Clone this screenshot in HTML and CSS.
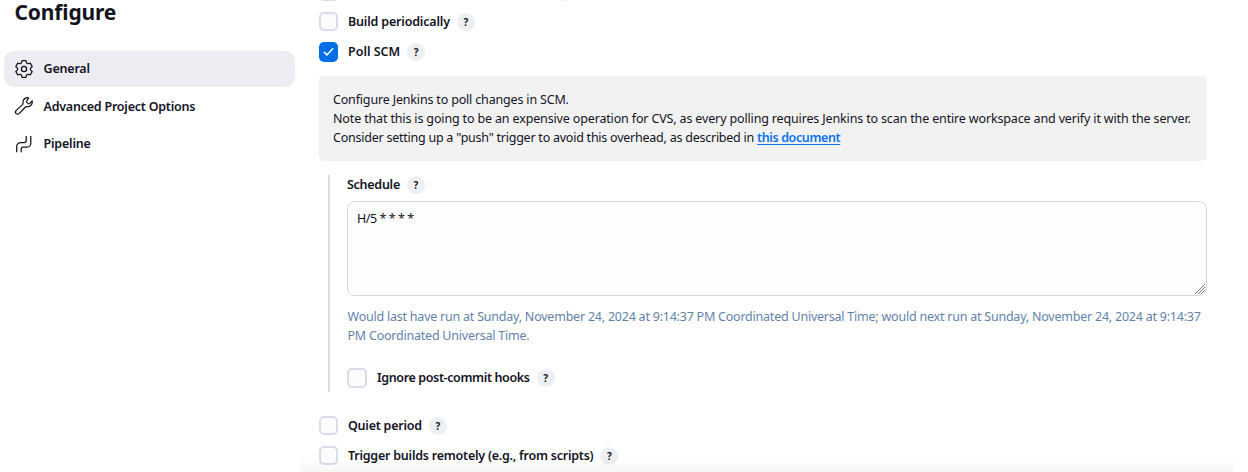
FILE: index.html
```html
<!DOCTYPE html>
<html lang="en">
<head>
<meta charset="utf-8">
<title>Configure</title>
<link rel="stylesheet" href="styles.css">
</head>
<body>
<div class="page">
  <aside class="sidebar">
    <h1 class="title"><span>Configure</span></h1>
    <nav class="tasks">
      <a class="task task--active">
        <svg class="icon" viewBox="0 0 18 18"><circle cx="9" cy="9" r="2.600"/><path d="M7 .7h4l.6 2.300 1.300.75 2.300-.65 2 3.400-1.700 1.600v1.800l1.700 1.600-2 3.400-2.300-.65-1.300.75-.6 2.300H7l-.6-2.300-1.300-.75-2.300.65-2-3.400 1.700-1.600V8.100L.8 6.500l2-3.400 2.300.65L6.400 3z"/></svg>
        <span class="general">General</span>
      </a>
      <a class="task">
        <svg class="icon" viewBox="0 0 18 18"><path d="M13.700.9C11.400.2 8.300 1.700 8 4.500c-.15 1.400.5 2.100-.5 3.100L1.300 13.400c-1.100 1.100-.9 2.500-.2 3.200.8.800 2.200.9 3.200-.2l5.900-6.200c1-1 1.700-.4 3.100-.5 2.900-.3 4.400-3.200 3.900-5.800l-2.500 2.500c-.6.600-1.300.5-1.800 0l-1-1c-.5-.5-.6-1.200 0-1.800z"/></svg>
        <span class="advanced">Advanced Project Options</span>
      </a>
      <a class="task">
        <svg class="icon" viewBox="0 0 18 18"><path d="M1.700 17.200v-5.700a4 4 0 0 1 4-4h3.500a2 2 0 0 0 2-2V1M6.200 17.200v-3a2 2 0 0 1 2-2h3.600a4 4 0 0 0 4-4V1"/></svg>
        <span class="general">Pipeline</span>
      </a>
    </nav>
  </aside>
  <main class="main">
    <div class="row row--clipped"><i class="box"></i><span class="help"></span></div>
    <div class="row"><i class="box"></i><label class="build">Build periodically</label><span class="help">?</span></div>
    <div class="row"><i class="box box--on"><svg viewBox="0 0 19 20"><path d="M5.300 10.300l2.700 2.600 5.700-6.200"/></svg></i><label class="poll">Poll SCM</label><span class="help">?</span></div>
    <section class="info">
      <p class="info-a">Configure Jenkins to poll changes in SCM.</p>
      <p class="info-b">Note that this is going to be an expensive operation for CVS, as every polling requires Jenkins to scan the entire workspace and verify it with the server.</p>
      <p class="info-c">Consider setting up a "push" trigger to avoid this overhead, as described in <a class="link">this document</a></p>
    </section>
    <section class="nested">
      <div class="row row--schedule"><label class="schedule">Schedule</label><span class="help">?</span></div>
      <div class="textarea"><span>H/5 * * * *</span>
        <svg class="grip" viewBox="0 0 10 10"><path d="M0 10L10 0M3 10l7-7M6 10l4-4"/></svg>
      </div>
      <div class="desc"><p>Would last have run at Sunday, November 24, 2024 at 9:14:37 PM Coordinated Universal Time; would next run at Sunday, November 24, 2024 at 9:14:37</p><p>PM Coordinated Universal Time.</p></div>
      <div class="row row--ignore"><i class="box"></i><label class="ignore">Ignore post-commit hooks</label><span class="help">?</span></div>
    </section>
    <div class="row"><i class="box"></i><label class="quiet">Quiet period</label><span class="help">?</span></div>
    <div class="row"><i class="box"></i><label class="trigger">Trigger builds remotely (e.g., from scripts)</label><span class="help">?</span></div>
  </main>
  <div class="shade"></div>
</div>
</body>
</html>
```
FILE: styles.css
```css
* { box-sizing: border-box; }
body { margin: 0; background: #fff; color: #14141f; font: 12.5px/19px "Noto Sans", sans-serif; }
p { margin: 0; white-space: nowrap; }
.page { position: relative; display: flex; width: 1248px; height: 472px; overflow: hidden; }
.sidebar { width: 319px; padding-left: 4px; }
.title { margin: 0 0 26px 10.5px; font-size: 21px; line-height: 25px; font-weight: 700; letter-spacing: -0.15px; }
.tasks { display: flex; flex-direction: column; gap: 2px; width: 291px; }
.task { display: flex; align-items: center; gap: 10.5px; height: 35.5px; padding-left: 11px; border-radius: 10px; font-weight: 600; white-space: nowrap; }
.task--active { background: #ececf2; }
.icon { width: 18px; height: 18px; fill: none; stroke: #14141f; stroke-width: 1.25; stroke-linecap: round; stroke-linejoin: round; overflow: visible; }
.task:last-child .icon { stroke-linecap: butt; }
.general { letter-spacing: -0.2px; }
.advanced { letter-spacing: -0.23px; }
.main { display: flex; flex-direction: column; width: 888px; margin-top: -18px; }
.row { display: flex; align-items: flex-start; height: 20px; margin-bottom: 10px; flex: none; }
.row label { margin-right: 7px; font-weight: 600; white-space: nowrap; }
.row--clipped .help { margin-left: 207px; }
.box { width: 19px; height: 19px; margin-right: 10px; flex: none; border: 2px solid #d8dde9; border-radius: 5px; background: #fcfcfd; }
.box--on { height: 20px; border: 0; background: #006ee6; }
.row--ignore .box { width: 20px; height: 20px; }
.box svg { display: block; width: 19px; height: 20px; fill: none; stroke: #fff; stroke-width: 1.5; stroke-linecap: round; stroke-linejoin: round; }
.help { width: 18px; height: 18px; margin-top: 1px; flex: none; border-radius: 50%; background: #edf0f3; font-size: 10px; line-height: 18px; font-weight: 700; text-align: center; }
.build { letter-spacing: -0.18px; }
.schedule { letter-spacing: -0.27px; }
.ignore { letter-spacing: -0.37px; }
.quiet { letter-spacing: -0.23px; }
.trigger { letter-spacing: -0.23px; }
.info { height: 85px; margin: 4px 0 14px; padding: 14px; border-radius: 5px; background: #f2f2f2; }
.info-a { letter-spacing: -0.17px; }
.info-b { letter-spacing: -0.15px; }
.info-c { letter-spacing: -0.24px; }
.link { color: #0b74ea; font-weight: 600; letter-spacing: -0.38px; text-decoration: underline; text-underline-offset: 2px; }
.nested { height: 217px; margin: 0 0 24px 9px; padding-left: 17px; border-left: 2px solid #d8dbea; }
.row--schedule { margin-bottom: 6px; }
.textarea { position: relative; height: 95px; padding: 7px 9px; border: 1px solid #d3d9e4; border-radius: 8px; background: #fdfdfd; letter-spacing: -0.45px; }
.grip { position: absolute; right: 1px; bottom: 1px; width: 10px; height: 10px; stroke: #777; stroke-width: 1; }
.desc { margin: 11px 0 23px; padding-left: 0.5px; color: #6482a8; letter-spacing: -0.225px; }
.shade { position: absolute; left: 300px; right: 14px; bottom: 0; height: 15px; background: linear-gradient(#fff0, #00000008); }
```
